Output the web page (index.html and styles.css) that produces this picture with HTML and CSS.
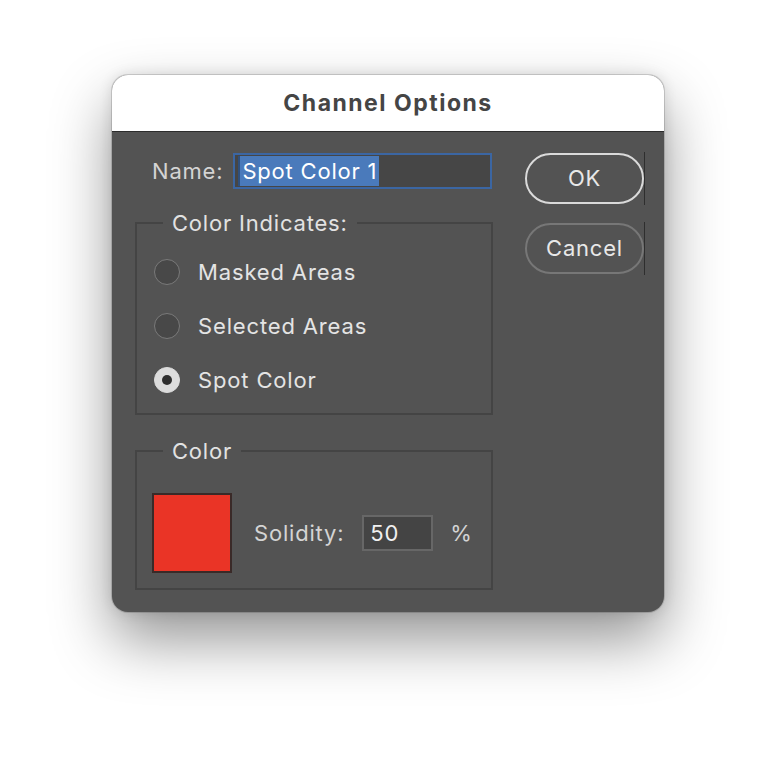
FILE: index.html
```html
<!DOCTYPE html>
<html lang="en">
<head>
<meta charset="utf-8">
<title>Channel Options</title>
<link rel="stylesheet" href="styles.css">
</head>
<body>
<div class="window">
  <div class="titlebar">Channel Options</div>
  <div class="content">
    <div class="main">
      <div class="name-row">
        <span class="label">Name:</span>
        <div class="name-input"><span class="selection">Spot Color 1</span></div>
      </div>
      <div class="group indicates">
        <span class="legend">Color Indicates:</span>
        <div class="group-body radios">
          <div class="radio-row"><span class="radio"></span><span class="radio-label">Masked Areas</span></div>
          <div class="radio-row"><span class="radio"></span><span class="radio-label">Selected Areas</span></div>
          <div class="radio-row"><span class="radio checked"></span><span class="radio-label">Spot Color</span></div>
        </div>
      </div>
      <div class="group color">
        <span class="legend">Color</span>
        <div class="group-body color-row">
          <div class="swatch"></div>
          <span class="label solidity-label">Solidity:</span>
          <div class="num-input">50</div>
          <span class="label pct">%</span>
        </div>
      </div>
    </div>
    <div class="buttons">
      <div class="btn-wrap"><div class="btn ok">OK</div></div>
      <div class="btn-wrap"><div class="btn cancel">Cancel</div></div>
    </div>
  </div>
</div>
</body>
</html>
```
FILE: styles.css
```css
html, body {
  margin: 0;
  padding: 0;
  background: #ffffff;
}
body {
  width: 776px;
  height: 760px;
  display: flex;
  justify-content: center;
  align-items: flex-start;
  padding-top: 75px;
  box-sizing: border-box;
  font-family: "Inter", "Noto Sans", "Liberation Sans", sans-serif;
}
.window {
  width: 552px;
  border-radius: 16px;
  overflow: hidden;
  background: #535353;
  box-shadow: 0 0 0 1px rgba(0,0,0,0.14), 0 28px 60px rgba(0,0,0,0.42), 0 0 14px rgba(0,0,0,0.12);
}
.titlebar {
  height: 56px;
  background: #ffffff;
  border-bottom: 1px solid #2c2c2c;
  display: flex;
  align-items: center;
  justify-content: center;
  font-size: 23px;
  font-weight: 700;
  color: #454545;
  letter-spacing: 1.5px;
}
.content {
  display: flex;
  padding: 21px 18px 22px 23px;
  gap: 32px;
}
.main {
  width: 358px;
  display: flex;
  flex-direction: column;
}
.label {
  font-size: 22px;
  color: #d4d4d4;
  letter-spacing: 0.8px;
}
.name-row {
  display: flex;
  align-items: center;
  padding-left: 17px;
  gap: 10px;
}
.name-input {
  width: 259px;
  height: 36px;
  box-sizing: border-box;
  border: 2px solid #3b66a3;
  background: #464646;
  display: flex;
  align-items: center;
  padding-left: 3px;
}
.selection {
  background: #4a7abb;
  color: #ffffff;
  font-size: 22px;
  line-height: 30px;
  padding: 0 2px 0 2px;
  letter-spacing: 0.8px;
  border-left: 2px solid #2f4f7c;
}
.group {
  border: 2px solid #444444;
  display: flex;
  flex-direction: column;
}
.legend {
  align-self: flex-start;
  margin: -14px 0 0 26px;
  padding: 0 9px;
  background: #535353;
  font-size: 22px;
  line-height: 26px;
  color: #e2e2e2;
  letter-spacing: 0.8px;
}
.indicates {
  margin-top: 33px;
}
.radios {
  padding: 9px 0 6px 17px;
}
.radio-row {
  height: 54px;
  display: flex;
  align-items: center;
  gap: 18px;
}
.radio {
  width: 26px;
  height: 26px;
  box-sizing: border-box;
  border-radius: 50%;
  border: 1.5px solid #7a7a7a;
  background: #484848;
  display: flex;
  align-items: center;
  justify-content: center;
}
.radio.checked {
  border-color: #dcdcdc;
  background: #dcdcdc;
}
.radio.checked::after {
  content: "";
  width: 10px;
  height: 10px;
  border-radius: 50%;
  background: #2e2e2e;
}
.radio-label {
  font-size: 22px;
  color: #e4e4e4;
  letter-spacing: 0.85px;
}
.color {
  margin-top: 35px;
}
.color-row {
  display: flex;
  align-items: center;
  padding: 29px 0 15px 15px;
}
.swatch {
  width: 80px;
  height: 80px;
  box-sizing: border-box;
  background: #ea3426;
  border: 2px solid #3a2a28;
}
.solidity-label {
  margin-left: 22px;
}
.num-input {
  margin-left: 18px;
  width: 71px;
  height: 36px;
  box-sizing: border-box;
  border: 2px solid #676767;
  background: #444444;
  color: #f0f0f0;
  font-size: 22px;
  letter-spacing: 0.8px;
  display: flex;
  align-items: center;
  padding-left: 6px;
}
.pct {
  margin-left: 17px;
}
.buttons {
  display: flex;
  flex-direction: column;
  gap: 17px;
  margin-top: -1px;
}
.btn-wrap {
  display: flex;
  border-right: 1px solid #2e2e2e;
  padding: 1px 0;
}
.btn {
  width: 119px;
  height: 51px;
  box-sizing: border-box;
  border-radius: 26px;
  display: flex;
  align-items: center;
  justify-content: center;
  font-size: 22px;
  line-height: 1;
  padding-bottom: 2px;
  color: #e8e8e8;
  letter-spacing: 0.8px;
}
.btn.ok {
  border: 2px solid #dadada;
}
.btn.cancel {
  border: 2px solid #777777;
}
```
